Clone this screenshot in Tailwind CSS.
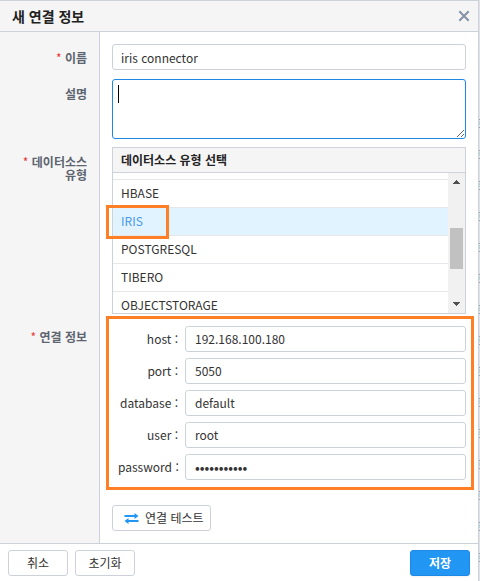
<!DOCTYPE html>
<html lang="ko">
<head>
<meta charset="utf-8">
<meta name="viewport" content="width=device-width, initial-scale=1">
<title>새 연결 정보</title>
<script src="https://cdn.jsdelivr.net/npm/@tailwindcss/browser@4"></script>
</head>
<body class="flex min-h-screen bg-white font-['Noto_Sans_CJK_KR',sans-serif] text-[12px] leading-5 text-[#333]">
<main class="flex min-w-0 grow flex-col border-t border-r border-[#cdd2da]">
  <header class="flex h-[31px] items-center justify-between border-b border-[#cdd2da] bg-[#f5f5f5] pr-2 pl-3">
    <h1 class="text-[14px] font-bold text-[#222]">새 연결 정보</h1>
    <button type="button" aria-label="닫기" class="flex size-3 items-center justify-center">
      <svg viewBox="0 0 12 12" class="size-3" fill="none" stroke="#8492a6" stroke-width="2"><path d="M1.3 1.3l9.4 9.4M10.7 1.3l-9.4 9.4"/></svg>
    </button>
  </header>

  <form id="connection" class="grid grow grid-cols-[100px_1fr] grid-rows-[36px_68px_175px_1fr]">
    <div class="row-span-4 grid grid-rows-subgrid border-r border-[#cdd2da] bg-[#f5f5f5] pr-3 text-right text-[12px] leading-[13px] font-bold text-[#5c6470] *:pt-[19px]">
      <label for="name"><span class="font-normal text-[#e53935]">*</span> 이름</label>
      <label for="description">설명</label>
      <div id="type-label"><span class="font-normal text-[#e53935]">*</span> 데이터소스<br>유형</div>
      <div><span class="font-normal text-[#e53935]">*</span> 연결 정보</div>
    </div>

    <div class="row-span-4 flex flex-col px-3 pt-3">
      <input id="name" type="text" value="iris connector" class="h-[26px] rounded-[3px] border border-[#cdd2da] px-2">
      <div class="relative mt-[9px] h-[60px]">
        <textarea id="description" class="block h-full w-full resize rounded-[3px] border border-[#1e88e5] p-[5px] caret-transparent outline-none"></textarea>
        <span class="absolute top-[6px] left-[6px] h-[18px] w-px bg-black"></span>
      </div>

      <section class="relative mt-2 flex h-[167px] flex-col border border-[#cdd2da]">
        <h2 class="h-[25px] shrink-0 border-b border-[#cdd2da] bg-[#f5f5f5] px-2 leading-6 font-bold text-[#222]">데이터소스 유형 선택</h2>
        <div class="flex min-h-0 grow">
          <div role="listbox" aria-labelledby="type-label" class="flex min-w-0 grow flex-col overflow-hidden *:shrink-0 *:border-b *:border-[#e5e7eb] *:px-2 *:pb-px *:text-left">
            <div class="h-[7px]"></div>
            <button type="button" role="option" class="h-7">HBASE</button>
            <button type="button" role="option" aria-selected="true" class="h-7 bg-[#e1f3ff] text-[#4a98ea]">IRIS</button>
            <button type="button" role="option" class="h-7">POSTGRESQL</button>
            <button type="button" role="option" class="h-7">TIBERO</button>
            <button type="button" role="option" class="h-7">OBJECTSTORAGE</button>
          </div>
          <div class="flex w-[17px] flex-col items-center bg-[#f1f1f1] py-[7px]">
            <svg viewBox="0 0 7 4" class="h-1 w-[7px]" fill="#505050" shape-rendering="crispEdges"><path d="M3 0h1v1h1v1h1v1h1v1H0V3h1V2h1V1h1z"/></svg>
            <span class="mt-11 h-[41px] w-[13px] bg-[#c1c1c1]"></span>
            <svg viewBox="0 0 7 4" class="mt-auto h-1 w-[7px]" fill="#505050" shape-rendering="crispEdges"><path d="M0 0h7v1H6v1H5v1H4v1H3V3H2V2H1V1H0z"/></svg>
          </div>
        </div>
        <span class="pointer-events-none absolute top-[57px] -left-[7px] h-[34px] w-[63px] border-3 border-[#ff7f27]"></span>
      </section>

      <div class="mt-[2px] mr-[-8px] ml-[-6px] grid grid-cols-[60px_1fr] gap-x-[7px] gap-y-[6px] border-3 border-[#ff7f27] py-[7px] pr-[5px] pl-[9px] leading-[26px] [&_input]:h-[26px] [&_input]:min-w-0 [&_input]:rounded-[3px] [&_input]:border [&_input]:border-[#cdd2da] [&_input]:px-[9px] [&_label]:text-right [&_label]:whitespace-nowrap">
        <label for="host">host :</label><input id="host" type="text" value="192.168.100.180">
        <label for="port">port :</label><input id="port" type="text" value="5050">
        <label for="database">database :</label><input id="database" type="text" value="default">
        <label for="user">user :</label><input id="user" type="text" value="root">
        <label for="password">password :</label><input id="password" type="password" value="connector01" class="text-[14px]">
      </div>

      <button type="button" class="mt-[15px] mb-3 flex h-[26px] w-[99px] items-center gap-[6px] self-start rounded-[3px] border border-[#cdd2da] pl-[11px] whitespace-nowrap">
        <svg viewBox="0 0 14 11" class="h-[11px] w-[15px]" fill="#2196f3"><path d="M0 2h10V0l4 3-4 3V4H0zM14 7H4V5L0 8l4 3V9h10z"/></svg>
        연결 테스트
      </button>
    </div>
  </form>

  <footer class="flex h-[38px] items-center gap-[7px] border-t border-[#cdd2da] pr-2 pl-2">
    <button type="button" class="h-[26px] w-[60px] rounded-[3px] border border-[#cdd2da]">취소</button>
    <button type="reset" form="connection" class="h-[26px] w-[60px] rounded-[3px] border border-[#cdd2da]">초기화</button>
    <button type="submit" form="connection" class="ml-auto h-[26px] w-[60px] rounded-[3px] border border-[#1e88e5] bg-[#2196f3] font-bold text-white shadow-xs">저장</button>
  </footer>
</main>
<div class="w-px shrink-0 bg-[#dfe3e7] pt-[119px]">
  <svg class="h-[460px] w-px" aria-hidden="true" shape-rendering="crispEdges">
    <path d="M.5 0v460" stroke="#9aa3a8" stroke-dasharray="1 7 1 22"/>
    <path d="M.5 2v458" stroke="#b9d3d6" stroke-dasharray="4 27"/>
  </svg>
</div>
</body>
</html>
